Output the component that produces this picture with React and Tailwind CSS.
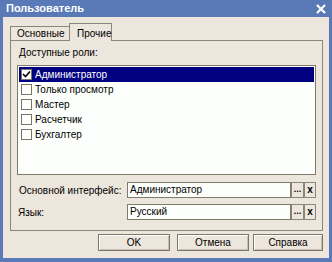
import React from "react";

const roles = ["Администратор", "Только просмотр", "Мастер", "Расчетчик", "Бухгалтер"];

function Check() {
  return (
    <svg width="9" height="9" viewBox="0 0 9 9">
      <path d="M1 4 L3.5 6.5 L8 1.5" stroke="#000" strokeWidth="1.6" fill="none" />
    </svg>
  );
}

function Field({ value }) {
  return (
    <div className="flex h-[16px] flex-1">
      <div className="flex-1 h-full border border-[#7f7b6c] bg-[#fcfffc] pl-[2px] leading-[14px] text-black whitespace-nowrap">{value}</div>
      <div className="w-[13px] h-full border border-[#8b8778] bg-[#ece6dc] flex items-center justify-center text-[9px] leading-none pb-[1px] text-black font-bold">...</div>
      <div className="w-[12px] h-full border border-[#8b8778] bg-[#ece6dc] flex items-center justify-center text-[10px] leading-none text-black font-bold">x</div>
    </div>
  );
}

function Btn({ children, w }) {
  return (
    <div className={`${w} h-[17px] border border-[#7d786a] bg-[#ece6dc] shadow-[inset_1px_1px_0_#fff,inset_-1px_-1px_0_#c7c0b2] flex items-center justify-center text-black`}>
      {children}
    </div>
  );
}

export default function App() {
  return (
    <div className="w-[332px] h-[262px] bg-[#5a7ab7] flex flex-col font-['Liberation_Sans',Arial,sans-serif] text-[10px] leading-[13px]">
      <div className="h-[17px] shrink-0 flex items-center justify-between pl-[6px] pr-[6px] text-white font-bold text-[11px]">
        <span>Пользователь</span>
        <svg width="10" height="10" viewBox="0 0 10 10">
          <path d="M1 1 L9 9 M9 1 L1 9" stroke="#fff" strokeWidth="2.2" />
        </svg>
      </div>
      <div className="flex-1 mx-[3px] mb-[4px] bg-[#ece6dc] flex flex-col pt-[6px] pl-[7px] pr-[6px]">
        <div className="flex items-end h-[17px] relative z-10">
          <div className="w-[59px] h-[14px] border-t border-l border-[#8b8778] bg-[#ece6dc] pl-[6px] leading-[14px] text-black whitespace-nowrap">Основные</div>
          <div className="w-[43px] h-[18px] -mb-px border-t border-l border-r border-[#8b8778] bg-[#ece6dc] pl-[7px] pt-[3px] text-black">Прочие</div>
        </div>
        <div className="h-[191px] border border-[#8b8778] px-[6px] pt-[5px] flex flex-col">
          <div className="h-[13px] ml-[2px] text-black">Доступные роли:</div>
          <div className="mt-[6px] h-[110px] shrink-0 border border-[#7f7b6c] bg-[#fcfffc] p-[1px] flex flex-col">
            {roles.map((r, i) => (
              <div key={r} className={`h-[15px] flex items-center pl-[2px] gap-[3px] ${i === 0 ? "bg-[#000080] text-white" : "text-black"}`}>
                <div className="w-[11px] h-[11px] border border-[#7a7668] bg-white flex items-center justify-center">
                  {i === 0 && <Check />}
                </div>
                <span>{r}</span>
              </div>
            ))}
          </div>
          <div className="mt-[7px] flex items-center">
            <div className="w-[110px] pl-[2px] text-black whitespace-nowrap">Основной интерфейс:</div>
            <Field value="Администратор" />
          </div>
          <div className="mt-[6px] flex items-center">
            <div className="w-[110px] pl-[1px] text-black">Язык:</div>
            <Field value="Русский" />
          </div>
        </div>
        <div className="flex mt-[3px] pl-[88px]">
          <Btn w="w-[72px]">OK</Btn>
          <div className="w-[7px]" />
          <Btn w="w-[72px]">Отмена</Btn>
          <div className="w-[4px]" />
          <Btn w="w-[70px]">Справка</Btn>
        </div>
      </div>
    </div>
  );
}
